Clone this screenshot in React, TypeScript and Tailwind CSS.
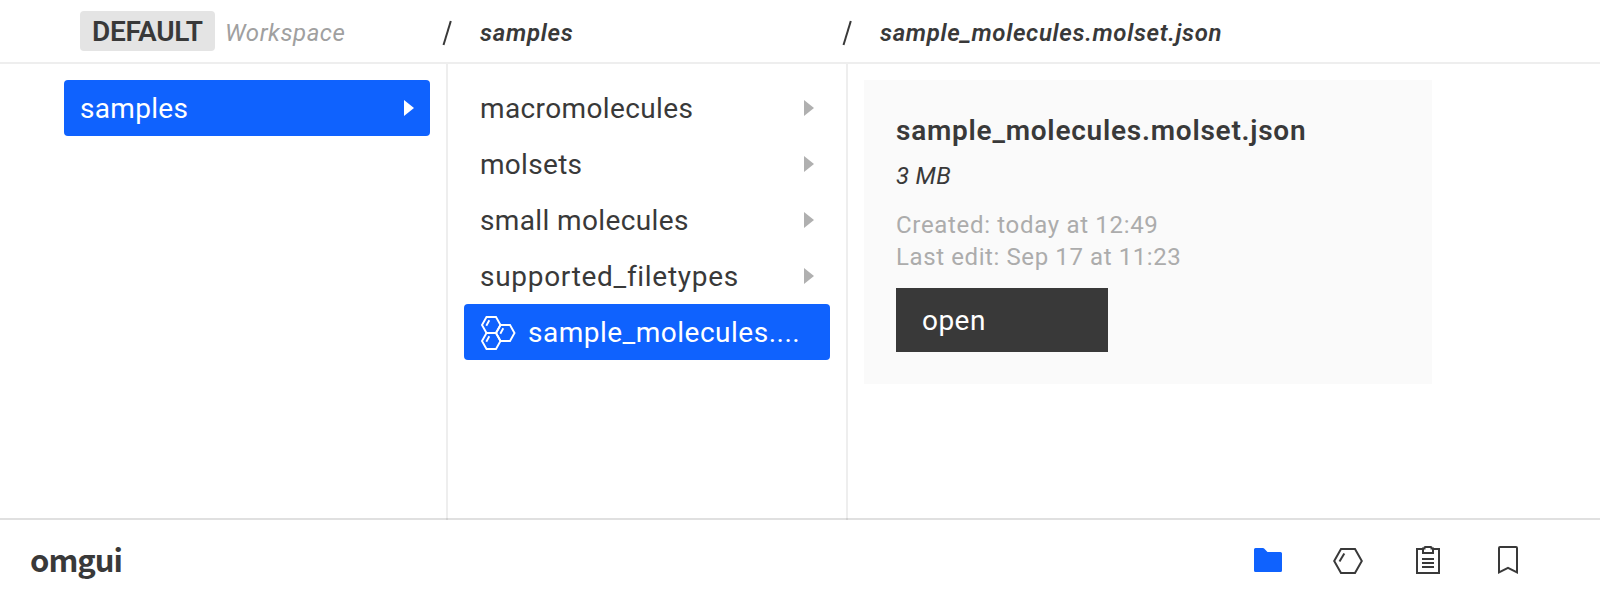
import React from "react";

function Arrow({ className }: { className: string }) {
  return (
    <svg width="10" height="16" viewBox="0 0 10 16" className={className}>
      <path d="M0 0L10 8L0 16Z" fill="currentColor" />
    </svg>
  );
}

function Slash() {
  return (
    <svg width="11" height="26" viewBox="0 0 11 26" className="mt-1">
      <path d="M1.5 25L8.8 1" stroke="#393939" strokeWidth="2" />
    </svg>
  );
}

function MoleculesIcon() {
  return (
    <svg
      width="36"
      height="36"
      viewBox="0 0 36 36"
      fill="none"
      stroke="white"
      strokeWidth="1.9"
      className="shrink-0"
    >
      <path d="M2 11L6.5 3H16L20.5 11L16 19H6.5Z" />
      <path d="M6.5 19H16L20.5 27L16 35H6.5L2 27Z" />
      <path d="M20.5 11H30L34.5 19L30 27H20.5L16 19Z" />
      <path d="M6.3 11.7L9.3 6.3M6.3 27.7L9.3 22.3M20.3 19.7L23.3 14.3" />
    </svg>
  );
}

function FolderIcon() {
  return (
    <svg width="32" height="32" viewBox="0 0 32 32" fill="#0f62fe">
      <path d="M3.5 3H11a1.5 1.5 0 0 1 1.1.5L15.5 7H28.5A1.5 1.5 0 0 1 30 8.5V25.5A1.5 1.5 0 0 1 28.5 27H3.5A1.5 1.5 0 0 1 2 25.5V4.5A1.5 1.5 0 0 1 3.5 3Z" />
    </svg>
  );
}

function HexagonIcon() {
  return (
    <svg width="32" height="32" viewBox="0 0 32 32" fill="none" stroke="#393939" strokeWidth="2">
      <path d="M2.2 16L9 4H23L29.8 16L23 28H9Z" />
      <path d="M7.5 16.6L12.3 8.5" />
    </svg>
  );
}

function ClipboardIcon() {
  return (
    <svg width="32" height="32" viewBox="0 0 32 32" fill="none" stroke="#393939" strokeWidth="2">
      <path d="M11 4H5V28H27V4H21" />
      <path d="M11 7.9V3.5H12.5V2.6Q12.5 2 13.1 2H18.9Q19.5 2 19.5 2.6V3.5H21V7.9Z" />
      <path d="M10 14H22M10 18H22M10 22H22" />
    </svg>
  );
}

function BookmarkIcon() {
  return (
    <svg width="32" height="32" viewBox="0 0 32 32" fill="none" stroke="#393939" strokeWidth="2">
      <path d="M8 2H24Q25 2 25 3V27.3L16 22.8L7 27.3V3Q7 2 8 2Z" />
    </svg>
  );
}

const folders = [
  { name: "macromolecules", track: "tracking-[0.38px]" },
  { name: "molsets", track: "tracking-[0.3px]" },
  { name: "small molecules", track: "tracking-[0.37px]" },
  { name: "supported_filetypes", track: "tracking-[0.7px]" },
];

export default function App() {
  return (
    <div className="flex h-[600px] w-[1600px] flex-col overflow-hidden bg-white font-['Roboto',sans-serif] text-[28px] text-[#393939]">
      <header className="flex h-16 shrink-0 items-center border-b-2 border-[#eee] pl-20">
        <div className="flex w-[362px] items-center">
          <div className="flex h-10 w-[135px] items-center rounded bg-[#e4e4e4] pl-3 pt-0.5 font-semibold tracking-[-0.3px]">
            DEFAULT
          </div>
          <span className="ml-2.5 pt-1 text-2xl italic tracking-[0.55px] text-[#a0a0a0]">
            Workspace
          </span>
        </div>
        <div className="flex w-[400px] items-center text-2xl font-semibold italic">
          <Slash />
          <span className="ml-[27px] pt-1 tracking-[0.75px]">samples</span>
        </div>
        <div className="flex items-center text-2xl font-semibold italic">
          <Slash />
          <span className="ml-[27px] pt-1 tracking-[0.67px]">sample_molecules.molset.json</span>
        </div>
      </header>
      <main className="flex h-[456px] shrink-0">
        <section className="w-[448px] border-r-2 border-[#eee] py-4 pl-16 pr-4">
          <div className="flex h-14 items-center justify-between rounded bg-[#0f62fe] px-4 text-white">
            <span className="pt-0.5 tracking-[0.3px]">samples</span>
            <Arrow className="text-white" />
          </div>
        </section>
        <section className="w-[400px] border-r-2 border-[#eee] p-4">
          {folders.map((f) => (
            <div key={f.name} className="flex h-14 items-center justify-between px-4">
              <span className={`pt-0.5 ${f.track}`}>{f.name}</span>
              <Arrow className="text-[#b0b0b0]" />
            </div>
          ))}
          <div className="flex h-14 items-center gap-3 rounded bg-[#0f62fe] px-4 text-white">
            <MoleculesIcon />
            <span className="pt-0.5 tracking-[0.5px]">sample_molecules....</span>
          </div>
        </section>
        <section className="p-4">
          <div className="flex h-[304px] w-[568px] flex-col items-start bg-[#fafafa] px-8 pt-[33px]">
            <h2 className="font-semibold leading-9 tracking-[0.76px]">sample_molecules.molset.json</h2>
            <p className="mt-[11px] text-2xl italic leading-8 tracking-[0.3px]">3 MB</p>
            <p className="mt-[17px] text-2xl leading-8 tracking-[0.68px] text-[#acacac]">
              Created: today at 12:49
            </p>
            <p className="text-2xl leading-8 tracking-[0.6px] text-[#acacac]">
              Last edit: Sep 17 at 11:23
            </p>
            <button className="mt-[15px] flex h-16 w-[212px] items-center bg-[#393939] pl-[26px] pt-0.5 tracking-[0.45px] text-white">
              open
            </button>
          </div>
        </section>
      </main>
      <footer className="-mt-0.5 flex h-[82px] shrink-0 items-center justify-between border-t-2 border-black/12 pl-[30px] pr-[76px]">
        <div className="pb-0.5 font-['Noto_Sans_CJK_JP',sans-serif] text-[31px] font-semibold leading-10 tracking-[-1px]">
          omgui
        </div>
        <nav className="flex gap-12 pt-0.5">
          <FolderIcon />
          <HexagonIcon />
          <ClipboardIcon />
          <BookmarkIcon />
        </nav>
      </footer>
    </div>
  );
}
